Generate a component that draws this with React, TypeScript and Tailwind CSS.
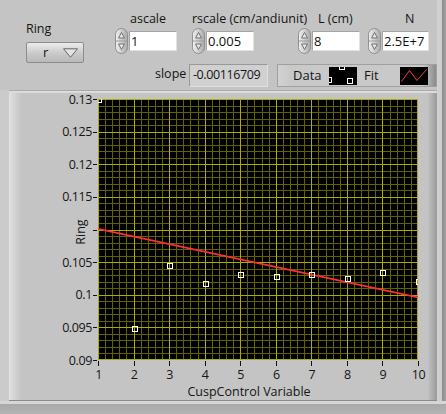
import React from 'react';

// plot geometry, local to the chart svg (which sits at page x 21, y 93)
const PX0 = 77;
const PX1 = 397;
const PY0 = 6;
const PY1 = 267;

const xPix = (v: number) => PX0 + ((v - 1) * (PX1 - PX0)) / 9;
const yPix = (v: number) => PY0 + ((0.13 - v) / 0.04) * (PY1 - PY0);

const data: [number, number][] = [
  [1, 0.13],
  [2, 0.0949],
  [3, 0.10456],
  [4, 0.1018],
  [5, 0.10318],
  [6, 0.10287],
  [7, 0.10318],
  [8, 0.10257],
  [9, 0.10349],
  [10, 0.1021],
];

// 0.11 is hidden under the axis name, as in the panel
const yTicks = ['0.13', '0.125', '0.12', '0.115', '', '0.105', '0.1', '0.095', '0.09'];

const Spinner = () => (
  <svg width="13" height="26" viewBox="0 0 13 26" className="shrink-0">
    <defs>
      <linearGradient id="spin" x1="0" x2="1" y1="0" y2="0">
        <stop offset="0" stopColor="#f2f2f2" />
        <stop offset="1" stopColor="#a9a9a9" />
      </linearGradient>
    </defs>
    <rect x="0.5" y="0.5" width="12" height="25" rx="6" fill="url(#spin)" stroke="#8f8f8f" />
    <line x1="1" y1="13" x2="12" y2="13" stroke="#9c9c9c" />
    <path d="M6.5 4.5 L9.5 10 H3.5 Z" fill="#e8e8e8" stroke="#707070" strokeLinejoin="round" />
    <path d="M6.5 21.5 L9.5 16 H3.5 Z" fill="#e8e8e8" stroke="#707070" strokeLinejoin="round" />
  </svg>
);

const Numeric = ({ value, width }: { value: string; width: string }) => (
  <div className="flex items-center h-[26px] mt-[1px]">
    <Spinner />
    <div
      className={`ml-[1px] h-[20px] ${width} bg-white border border-[#a4a4a4] border-r-[#e2e2e2] border-b-[#e2e2e2] flex items-center pl-[1px] text-[13px] leading-none text-[#111]`}
    >
      {value}
    </div>
  </div>
);

const Chart = () => {
  const xs = Array.from({ length: 46 }, (_, i) => PX0 + (i * (PX1 - PX0)) / 45);
  const ys = Array.from({ length: 41 }, (_, i) => PY0 + (i * (PY1 - PY0)) / 40);
  return (
    <svg width="406" height="307" viewBox="0 0 406 307" className="block">
      <defs>
        <clipPath id="plot">
          <rect x={PX0} y={PY0} width={PX1 - PX0} height={PY1 - PY0} />
        </clipPath>
        {/* vertical baseline, bottom to top, for the y-axis title */}
        <path id="ytitle" d="M64 239 V39" />
      </defs>
      <rect x={PX0} y={PY0} width={PX1 - PX0} height={PY1 - PY0} fill="#000" />
      <g shapeRendering="crispEdges" strokeWidth="1">
        {xs.map((x, i) =>
          i % 5 ? <line key={'mx' + i} x1={Math.round(x) + 0.5} x2={Math.round(x) + 0.5} y1={PY0} y2={PY1} stroke="#626200" /> : null
        )}
        {ys.map((y, i) =>
          i % 5 ? <line key={'my' + i} y1={Math.round(y) + 0.5} y2={Math.round(y) + 0.5} x1={PX0} x2={PX1} stroke="#626200" /> : null
        )}
        {xs.map((x, i) =>
          i % 5 ? null : <line key={'Mx' + i} x1={Math.min(Math.round(x), PX1 - 1) + 0.5} x2={Math.min(Math.round(x), PX1 - 1) + 0.5} y1={PY0} y2={PY1} stroke="#acac00" />
        )}
        {ys.map((y, i) =>
          i % 5 ? null : <line key={'My' + i} y1={Math.min(Math.round(y), PY1 - 1) + 0.5} y2={Math.min(Math.round(y), PY1 - 1) + 0.5} x1={PX0} x2={PX1} stroke="#acac00" />
        )}
      </g>
      <g clipPath="url(#plot)">
        <line x1={xPix(1)} y1={yPix(0.1101)} x2={xPix(10)} y2={yPix(0.0996)} stroke="#ff3030" strokeWidth="1.7" />
        {data.map(([x, y]) => (
          <rect
            key={x}
            x={Math.round(xPix(x)) - 2}
            y={Math.round(yPix(y)) - 2}
            width="5"
            height="5"
            fill="none"
            stroke="#fff"
            strokeWidth="1"
            shapeRendering="crispEdges"
          />
        ))}
      </g>
      {/* axes ticks */}
      <g shapeRendering="crispEdges" stroke="#111">
        {yTicks.map((t, i) => {
          const y = Math.round(PY0 + (i * (PY1 - PY0)) / 8) + 0.5;
          return <line key={i} x1={PX0 - 5} x2={PX0 - 1} y1={y} y2={y} />;
        })}
        {Array.from({ length: 10 }, (_, i) => {
          const x = Math.round(xPix(i + 1)) + 0.5;
          return <line key={i} x1={x} x2={x} y1={PY1 + 1} y2={PY1 + 6} />;
        })}
      </g>
      <g fontSize="12.5" fill="#151515" letterSpacing="-0.4">
        {yTicks.map((t, i) =>
          t ? (
            <text key={i} x={PX0 - 6} y={PY0 + (i * (PY1 - PY0)) / 8 + 4.5} textAnchor="end">
              {t}
            </text>
          ) : null
        )}
        {Array.from({ length: 10 }, (_, i) => (
          <text key={i} x={xPix(i + 1) + 0.5} y={PY1 + 19} textAnchor="middle">
            {i + 1}
          </text>
        ))}
      </g>
      <text fontSize="12.5" fill="#151515">
        <textPath href="#ytitle" startOffset="50%" textAnchor="middle">
          Ring
        </textPath>
      </text>
      <text x="228" y="303" fontSize="12.5" fill="#151515" textAnchor="middle">
        CuspControl Variable
      </text>
    </svg>
  );
};

export default function App() {
  return (
    <div className="w-[446px] h-[414px] bg-[#c4c4c4] flex flex-col overflow-hidden text-[12.5px] text-[#151515] font-[family-name:'Open_Sans',sans-serif]">
      <div className="flex flex-1">
        <div className="w-[437px] flex flex-col">
          {/* controls */}
          <div className="h-[63px] flex items-start">
            <div className="ml-[25px] mt-[21px] w-[59px] flex flex-col">
              <div className="h-[16px] leading-[16px] pl-[1px]">Ring</div>
              <div className="mt-[5px] h-[21px] w-[58px] ml-[1px] rounded-[2px] border border-[#8c8c8c] bg-[linear-gradient(to_bottom,#ececec,#c9c9c9_55%,#b9b9b9)] flex items-center">
                <span className="pl-[16px] w-[36px] text-[13px] leading-none">r</span>
                <svg width="15" height="10" viewBox="0 0 15 10">
                  <path d="M0.5 0.8 H14.5 L7.5 9.2 Z" fill="#e4e4e4" stroke="#666" strokeLinejoin="round" />
                </svg>
              </div>
            </div>
            <div className="ml-[31px] mt-[11px] w-[62px] flex flex-col">
              <div className="h-[16px] leading-[16px] pl-[15px]">ascale</div>
              <Numeric value="1" width="w-[48px]" />
            </div>
            <div className="ml-[15px] mt-[11px] w-[62px] flex flex-col">
              <div className="h-[16px] leading-[16px] whitespace-nowrap">rscale (cm/andiunit)</div>
              <Numeric value="0.005" width="w-[48px]" />
            </div>
            <div className="ml-[44px] mt-[11px] w-[62px] flex flex-col">
              <div className="h-[16px] leading-[16px] pl-[20px]">L (cm)</div>
              <Numeric value="8" width="w-[48px]" />
            </div>
            <div className="ml-[8px] mt-[11px] w-[62px] flex flex-col">
              <div className="h-[16px] leading-[16px] pl-[37px]">N</div>
              <Numeric value="2.5E+7" width="w-[47px]" />
            </div>
          </div>
          {/* slope + legend */}
          <div className="h-[27px] flex items-start">
            <div className="ml-[155px] mt-[3px] w-[34px] leading-[16px]">slope</div>
            <div className="mt-[1px] w-[79px] h-[23px] bg-[#d0d0d0] border border-[#999] border-r-[#e0e0e0] border-b-[#e0e0e0] flex items-center pl-[3px] text-[12.5px] tracking-[-0.4px] leading-none">
              -0.00116709
            </div>
            <div className="ml-[9px] mt-[1px] w-[160px] h-[23px] border border-[#a0a0a0] bg-[linear-gradient(to_right,#d2d2d2,#c9c9c9_8%,#c9c9c9_92%,#8a8a8a)] flex items-center">
              <span className="pl-[15px] w-[51px] text-[13px]">Data</span>
              <svg width="28" height="18" viewBox="0 0 28 18">
                <rect width="28" height="18" fill="#000" />
                <g fill="none" stroke="#fff" strokeWidth="1" shapeRendering="crispEdges">
                  <rect x="10.5" y="-2.5" width="5" height="5" />
                  <rect x="-2.5" y="10.5" width="5" height="5" />
                  <rect x="18.5" y="11.5" width="5" height="5" />
                </g>
              </svg>
              <span className="ml-[7px] w-[36px] text-[13px]">Fit</span>
              <svg width="28" height="18" viewBox="0 0 28 18">
                <rect width="28" height="18" fill="#000" />
                <path d="M1.5 14.5 L9.5 3.5 L17 13.5 L26.5 2.5" fill="none" stroke="#ff3a3a" strokeWidth="1" />
              </svg>
            </div>
          </div>
          {/* graph frame */}
          <div className="flex flex-1">
            <div className="w-[9px] bg-[#cbcbcb]" />
            <div className="w-[428px] flex flex-col">
              <div className="h-[3px] bg-[linear-gradient(to_bottom,#a9a9a9,#a9a9a9_33%,#e2e2e2_34%,#d6d6d6)]" />
              <div className="flex flex-1">
                <div className="w-[12px] bg-[linear-gradient(to_right,#e4e4e4,#d8d8d8_25%,#c6c6c6)]" />
                <Chart />
                <div className="w-[10px] bg-[linear-gradient(to_right,#c6c6c6,#9a9a9a)]" />
              </div>
              <div className="h-[1px] bg-[#8a8a8a]" />
            </div>
          </div>
        </div>
        <div className="w-[9px] bg-[linear-gradient(to_right,#d2d2d2,#cdcdcd_55%,#8e8e8e_60%,#a3a3a3)]" />
      </div>
      <div className="h-[13px] bg-[linear-gradient(to_bottom,#d6d6d6,#d6d6d6_23%,#a9a9a9_24%,#b4b4b4)]" />
    </div>
  );
}
